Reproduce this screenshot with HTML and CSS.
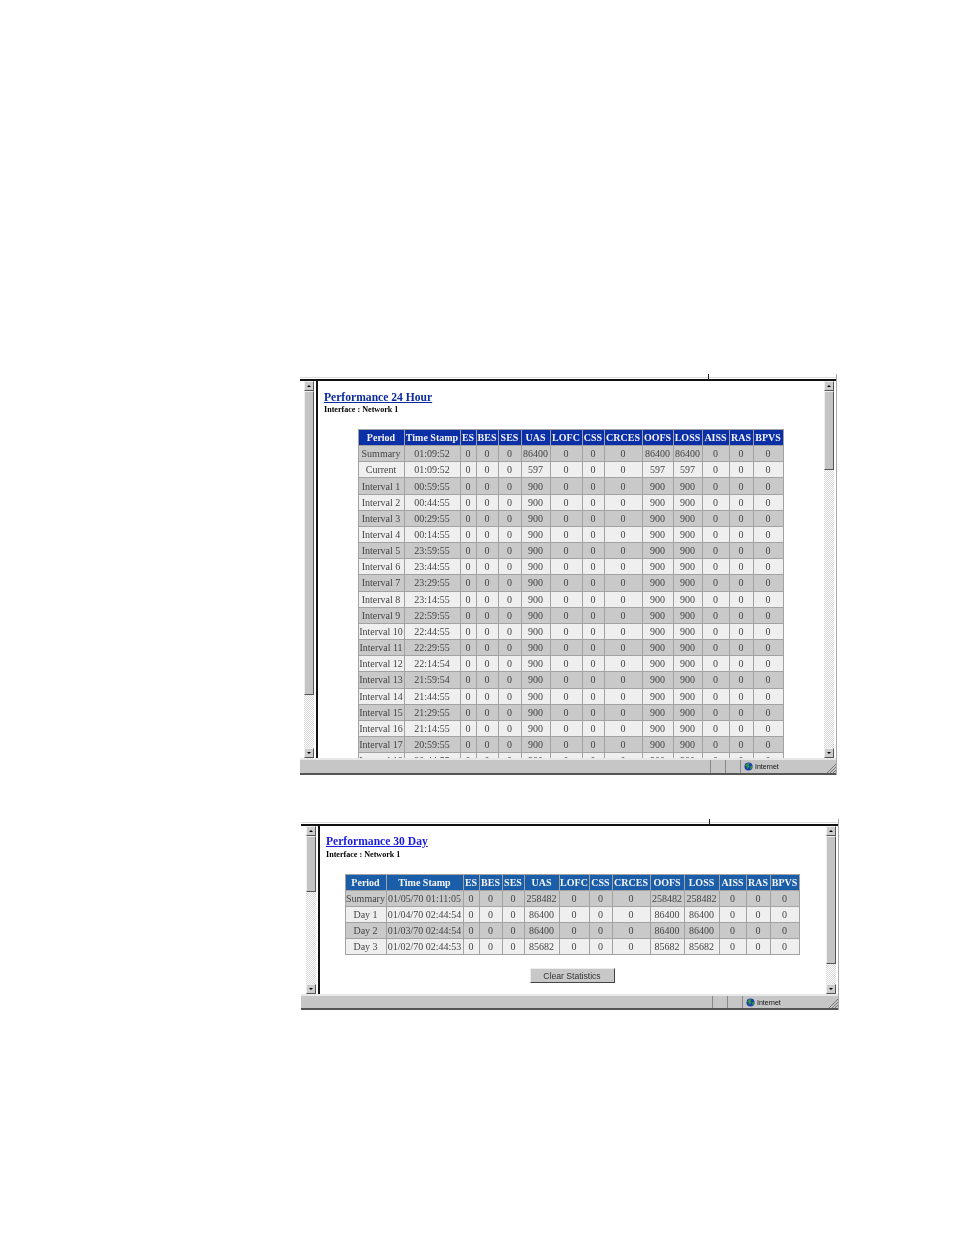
FILE: index.html
```html
<!DOCTYPE html>
<html lang="en">
  <head>
    <meta charset="UTF-8" />
    <title>Performance Statistics</title>
    <link rel="stylesheet" href="styles.css">
  </head>
  <body>
    <div class="window window-24">
      <span class="tick"></span>
      <div class="view">
        <div class="scrollbar left-bar">
          <div class="arrow arrow-up"></div>
          <div class="thumb"></div>
          <div class="track"></div>
          <div class="arrow arrow-down"></div>
        </div>
        <div class="doc">
          <a class="title" href="#">Performance 24 Hour</a>
          <p class="subtitle">Interface : Network 1</p>
          <table class="stats">
            <colgroup><col><col><col><col><col><col><col><col><col><col><col><col><col><col></colgroup>
            <thead>
              <tr><th>Period</th><th>Time Stamp</th><th>ES</th><th>BES</th><th>SES</th><th>UAS</th><th>LOFC</th><th>CSS</th><th>CRCES</th><th>OOFS</th><th>LOSS</th><th>AISS</th><th>RAS</th><th>BPVS</th></tr>
            </thead>
            <tbody>
              <tr><td>Summary</td><td>01:09:52</td><td>0</td><td>0</td><td>0</td><td>86400</td><td>0</td><td>0</td><td>0</td><td>86400</td><td>86400</td><td>0</td><td>0</td><td>0</td></tr>
              <tr><td>Current</td><td>01:09:52</td><td>0</td><td>0</td><td>0</td><td>597</td><td>0</td><td>0</td><td>0</td><td>597</td><td>597</td><td>0</td><td>0</td><td>0</td></tr>
              <tr><td>Interval 1</td><td>00:59:55</td><td>0</td><td>0</td><td>0</td><td>900</td><td>0</td><td>0</td><td>0</td><td>900</td><td>900</td><td>0</td><td>0</td><td>0</td></tr>
              <tr><td>Interval 2</td><td>00:44:55</td><td>0</td><td>0</td><td>0</td><td>900</td><td>0</td><td>0</td><td>0</td><td>900</td><td>900</td><td>0</td><td>0</td><td>0</td></tr>
              <tr><td>Interval 3</td><td>00:29:55</td><td>0</td><td>0</td><td>0</td><td>900</td><td>0</td><td>0</td><td>0</td><td>900</td><td>900</td><td>0</td><td>0</td><td>0</td></tr>
              <tr><td>Interval 4</td><td>00:14:55</td><td>0</td><td>0</td><td>0</td><td>900</td><td>0</td><td>0</td><td>0</td><td>900</td><td>900</td><td>0</td><td>0</td><td>0</td></tr>
              <tr><td>Interval 5</td><td>23:59:55</td><td>0</td><td>0</td><td>0</td><td>900</td><td>0</td><td>0</td><td>0</td><td>900</td><td>900</td><td>0</td><td>0</td><td>0</td></tr>
              <tr><td>Interval 6</td><td>23:44:55</td><td>0</td><td>0</td><td>0</td><td>900</td><td>0</td><td>0</td><td>0</td><td>900</td><td>900</td><td>0</td><td>0</td><td>0</td></tr>
              <tr><td>Interval 7</td><td>23:29:55</td><td>0</td><td>0</td><td>0</td><td>900</td><td>0</td><td>0</td><td>0</td><td>900</td><td>900</td><td>0</td><td>0</td><td>0</td></tr>
              <tr><td>Interval 8</td><td>23:14:55</td><td>0</td><td>0</td><td>0</td><td>900</td><td>0</td><td>0</td><td>0</td><td>900</td><td>900</td><td>0</td><td>0</td><td>0</td></tr>
              <tr><td>Interval 9</td><td>22:59:55</td><td>0</td><td>0</td><td>0</td><td>900</td><td>0</td><td>0</td><td>0</td><td>900</td><td>900</td><td>0</td><td>0</td><td>0</td></tr>
              <tr><td>Interval 10</td><td>22:44:55</td><td>0</td><td>0</td><td>0</td><td>900</td><td>0</td><td>0</td><td>0</td><td>900</td><td>900</td><td>0</td><td>0</td><td>0</td></tr>
              <tr><td>Interval 11</td><td>22:29:55</td><td>0</td><td>0</td><td>0</td><td>900</td><td>0</td><td>0</td><td>0</td><td>900</td><td>900</td><td>0</td><td>0</td><td>0</td></tr>
              <tr><td>Interval 12</td><td>22:14:54</td><td>0</td><td>0</td><td>0</td><td>900</td><td>0</td><td>0</td><td>0</td><td>900</td><td>900</td><td>0</td><td>0</td><td>0</td></tr>
              <tr><td>Interval 13</td><td>21:59:54</td><td>0</td><td>0</td><td>0</td><td>900</td><td>0</td><td>0</td><td>0</td><td>900</td><td>900</td><td>0</td><td>0</td><td>0</td></tr>
              <tr><td>Interval 14</td><td>21:44:55</td><td>0</td><td>0</td><td>0</td><td>900</td><td>0</td><td>0</td><td>0</td><td>900</td><td>900</td><td>0</td><td>0</td><td>0</td></tr>
              <tr><td>Interval 15</td><td>21:29:55</td><td>0</td><td>0</td><td>0</td><td>900</td><td>0</td><td>0</td><td>0</td><td>900</td><td>900</td><td>0</td><td>0</td><td>0</td></tr>
              <tr><td>Interval 16</td><td>21:14:55</td><td>0</td><td>0</td><td>0</td><td>900</td><td>0</td><td>0</td><td>0</td><td>900</td><td>900</td><td>0</td><td>0</td><td>0</td></tr>
              <tr><td>Interval 17</td><td>20:59:55</td><td>0</td><td>0</td><td>0</td><td>900</td><td>0</td><td>0</td><td>0</td><td>900</td><td>900</td><td>0</td><td>0</td><td>0</td></tr>
              <tr><td>Interval 18</td><td>20:44:55</td><td>0</td><td>0</td><td>0</td><td>900</td><td>0</td><td>0</td><td>0</td><td>900</td><td>900</td><td>0</td><td>0</td><td>0</td></tr>
            </tbody>
          </table>
        </div>
        <div class="scrollbar right-bar">
          <div class="arrow arrow-up"></div>
          <div class="thumb"></div>
          <div class="track"></div>
          <div class="arrow arrow-down"></div>
        </div>
      </div>
      <div class="statusbar">
        <div class="status-main"></div>
        <div class="status-cell"></div>
        <div class="status-cell"></div>
        <div class="status-zone">
          <svg class="globe" viewBox="0 0 10 10"><circle cx="5" cy="5" r="4.5" fill="#1c3fb0"/><path d="M2 3l2-2 2 1-1 2 1 1-2 3-1-3-2-1z" fill="#2f9a3c"/><path d="M7 5l2-1 0 3-2 1z" fill="#2f9a3c"/></svg>
          <span>Internet</span>
        </div>
        <svg class="grip" viewBox="0 0 10 10"><path d="M1 10L10 1M4 10l6-6M7 10l3-3" stroke="#777" fill="none"/></svg>
      </div>
    </div>

    <div class="window window-30">
      <span class="tick"></span>
      <div class="view">
        <div class="scrollbar left-bar">
          <div class="arrow arrow-up"></div>
          <div class="thumb"></div>
          <div class="track"></div>
          <div class="arrow arrow-down"></div>
        </div>
        <div class="doc">
          <a class="title" href="#">Performance 30 Day</a>
          <p class="subtitle">Interface : Network 1</p>
          <table class="stats">
            <colgroup><col><col><col><col><col><col><col><col><col><col><col><col><col><col></colgroup>
            <thead>
              <tr><th>Period</th><th>Time Stamp</th><th>ES</th><th>BES</th><th>SES</th><th>UAS</th><th>LOFC</th><th>CSS</th><th>CRCES</th><th>OOFS</th><th>LOSS</th><th>AISS</th><th>RAS</th><th>BPVS</th></tr>
            </thead>
            <tbody>
              <tr><td>Summary</td><td>01/05/70 01:11:05</td><td>0</td><td>0</td><td>0</td><td>258482</td><td>0</td><td>0</td><td>0</td><td>258482</td><td>258482</td><td>0</td><td>0</td><td>0</td></tr>
              <tr><td>Day 1</td><td>01/04/70 02:44:54</td><td>0</td><td>0</td><td>0</td><td>86400</td><td>0</td><td>0</td><td>0</td><td>86400</td><td>86400</td><td>0</td><td>0</td><td>0</td></tr>
              <tr><td>Day 2</td><td>01/03/70 02:44:54</td><td>0</td><td>0</td><td>0</td><td>86400</td><td>0</td><td>0</td><td>0</td><td>86400</td><td>86400</td><td>0</td><td>0</td><td>0</td></tr>
              <tr><td>Day 3</td><td>01/02/70 02:44:53</td><td>0</td><td>0</td><td>0</td><td>85682</td><td>0</td><td>0</td><td>0</td><td>85682</td><td>85682</td><td>0</td><td>0</td><td>0</td></tr>
            </tbody>
          </table>
          <div class="actions">
            <button class="clear-btn" type="button">Clear Statistics</button>
          </div>
        </div>
        <div class="scrollbar right-bar">
          <div class="arrow arrow-up"></div>
          <div class="thumb"></div>
          <div class="track"></div>
          <div class="arrow arrow-down"></div>
        </div>
      </div>
      <div class="statusbar">
        <div class="status-main"></div>
        <div class="status-cell"></div>
        <div class="status-cell"></div>
        <div class="status-zone">
          <svg class="globe" viewBox="0 0 10 10"><circle cx="5" cy="5" r="4.5" fill="#1c3fb0"/><path d="M2 3l2-2 2 1-1 2 1 1-2 3-1-3-2-1z" fill="#2f9a3c"/><path d="M7 5l2-1 0 3-2 1z" fill="#2f9a3c"/></svg>
          <span>Internet</span>
        </div>
        <svg class="grip" viewBox="0 0 10 10"><path d="M1 10L10 1M4 10l6-6M7 10l3-3" stroke="#777" fill="none"/></svg>
      </div>
    </div>
  </body>
</html>
```

FILE: styles.css
```css
html {
  font-family: "Liberation Serif", serif;
}

body {
  margin: 0;
  padding-top: 374px;
  height: 861px;
  overflow: hidden;
  background-color: #fff;
}

/* browser windows */
.window {
  position: relative;
  display: flex;
  flex-direction: column;
  box-sizing: border-box;
  padding-top: 3px;
  border-right: 1px solid #aaa;
  background-color: #fff;
  filter: blur(0.3px);
}

.window-24 {
  width: 537px;
  height: 401px;
  margin-left: 300px;
}

.window-30 {
  width: 538px;
  height: 191px;
  margin-top: 44px;
  margin-left: 301px;
}

.window::before {
  content: "";
  display: block;
  height: 1px;
  margin-bottom: 1px;
  background-color: #ddd;
}

.tick {
  position: absolute;
  top: 0;
  left: 408px;
  width: 1px;
  height: 6px;
  background-color: #222;
}

.view {
  flex: 1;
  display: flex;
  min-height: 0;
  border-top: 2px solid #111;
}

.doc {
  flex: 1;
  min-width: 0;
  overflow: hidden;
  box-sizing: border-box;
  padding: 10px 0 0 6px;
  border-left: 2px solid #111;
}

.window-30 .doc {
  padding-top: 9px;
}

/* scrollbars */
.scrollbar {
  display: flex;
  flex-direction: column;
  width: 10px;
  flex-shrink: 0;
}

.left-bar {
  margin-left: 4px;
  margin-right: 2px;
}

.right-bar {
  margin-left: 1px;
  margin-right: 2px;
}

.window-30 .left-bar {
  margin-left: 5px;
}

.arrow {
  position: relative;
  height: 10px;
  flex-shrink: 0;
  box-sizing: border-box;
  background-color: #ccc;
  border: 1px solid;
  border-color: #eee #555 #555 #eee;
}

.arrow::after {
  content: "";
  position: absolute;
  left: 2px;
  top: 3px;
  border-left: 2px solid transparent;
  border-right: 2px solid transparent;
}

.arrow-up::after {
  border-bottom: 2px solid #000;
}

.arrow-down::after {
  border-top: 2px solid #000;
}

.thumb {
  flex-shrink: 0;
  box-sizing: border-box;
  background-color: #c4c4c4;
  border: 1px solid;
  border-color: #eee #555 #555 #eee;
}

.track {
  flex: 1;
  background-color: #fff;
  background-image: conic-gradient(#d8d8d8 25%, #fff 25% 50%, #d8d8d8 50% 75%, #fff 75%);
  background-size: 2px 2px;
}

.window-24 .left-bar .thumb {
  height: 304px;
}

.window-24 .right-bar .thumb {
  height: 79px;
}

.window-30 .left-bar .thumb {
  height: 56px;
}

.window-30 .right-bar .thumb {
  height: 128px;
}

/* page text */
.title {
  display: block;
  font-size: 11.6px;
  line-height: 13px;
  font-weight: bold;
  color: #0a2a9e;
}

.window-30 .title {
  color: #1a1ae0;
}

.subtitle {
  margin: 1px 0 0;
  font-size: 8.1px;
  line-height: 10px;
  font-weight: bold;
  color: #000;
}

.window-30 .subtitle {
  margin-top: 2px;
}

/* stats tables */
.stats {
  table-layout: fixed;
  border-collapse: collapse;
  margin-top: 14px;
  font-size: 10px;
  color: #444;
}

.window-24 .stats {
  width: 425px;
  margin-left: 34px;
}

.window-30 .stats {
  width: 454px;
  margin-left: 19px;
}

.stats th,
.stats td {
  padding: 0 1px 0 0;
  height: 15.16px;
  border: 1px solid #a2a2a2;
  text-align: center;
  white-space: nowrap;
  overflow: hidden;
}

.window-30 .stats th,
.window-30 .stats td {
  height: 15px;
}

.stats th {
  font-weight: bold;
  color: #f4f4f4;
}

.window-24 .stats th {
  background-color: #0a2fa6;
}

.window-30 .stats th {
  background-color: #1a5da8;
}

.stats tbody tr:nth-child(odd) td {
  background-color: #c9c9c9;
}

.stats tbody tr:nth-child(even) td {
  background-color: #efefef;
}

.window-24 col:nth-child(1) { width: 46px; }
.window-24 col:nth-child(2) { width: 56px; }
.window-24 col:nth-child(3) { width: 16px; }
.window-24 col:nth-child(4) { width: 22px; }
.window-24 col:nth-child(5) { width: 23px; }
.window-24 col:nth-child(6) { width: 29px; }
.window-24 col:nth-child(7) { width: 32px; }
.window-24 col:nth-child(8) { width: 22px; }
.window-24 col:nth-child(9) { width: 38px; }
.window-24 col:nth-child(10) { width: 31px; }
.window-24 col:nth-child(11) { width: 29px; }
.window-24 col:nth-child(12) { width: 27px; }
.window-24 col:nth-child(13) { width: 24px; }
.window-24 col:nth-child(14) { width: 30px; }

.window-30 col:nth-child(1) { width: 41px; }
.window-30 col:nth-child(2) { width: 77px; }
.window-30 col:nth-child(3) { width: 16px; }
.window-30 col:nth-child(4) { width: 23px; }
.window-30 col:nth-child(5) { width: 22px; }
.window-30 col:nth-child(6) { width: 35px; }
.window-30 col:nth-child(7) { width: 30px; }
.window-30 col:nth-child(8) { width: 23px; }
.window-30 col:nth-child(9) { width: 38px; }
.window-30 col:nth-child(10) { width: 34px; }
.window-30 col:nth-child(11) { width: 35px; }
.window-30 col:nth-child(12) { width: 27px; }
.window-30 col:nth-child(13) { width: 24px; }
.window-30 col:nth-child(14) { width: 29px; }

.actions {
  display: flex;
  justify-content: center;
  width: 454px;
  margin-top: 13px;
  margin-left: 19px;
}

.clear-btn {
  width: 85px;
  height: 15px;
  padding: 0;
  font-family: "Liberation Sans", sans-serif;
  font-size: 8.6px;
  color: #333;
  background-color: #c8c8c8;
  border: 1px solid;
  border-color: #eee #444 #444 #eee;
}

/* status bar */
.statusbar {
  display: flex;
  align-items: stretch;
  flex-shrink: 0;
  height: 17px;
  box-sizing: border-box;
  background-color: #c6c6c6;
  border-top: 2px solid #e8e8e8;
  border-bottom: 2px solid #555;
  font-family: "Liberation Sans", sans-serif;
  font-size: 7px;
  color: #111;
}

.window-30 .statusbar {
  height: 16px;
}

.status-main {
  flex: 1;
}

.status-cell {
  width: 14px;
  border-left: 1px solid #888;
}

.status-zone {
  display: flex;
  align-items: center;
  gap: 2px;
  width: 96px;
  box-sizing: border-box;
  padding-left: 3px;
  border-left: 1px solid #888;
}

.globe {
  width: 9px;
  height: 9px;
}

.grip {
  align-self: flex-end;
  width: 10px;
  height: 10px;
  margin-left: -10px;
  flex-shrink: 0;
}
```
